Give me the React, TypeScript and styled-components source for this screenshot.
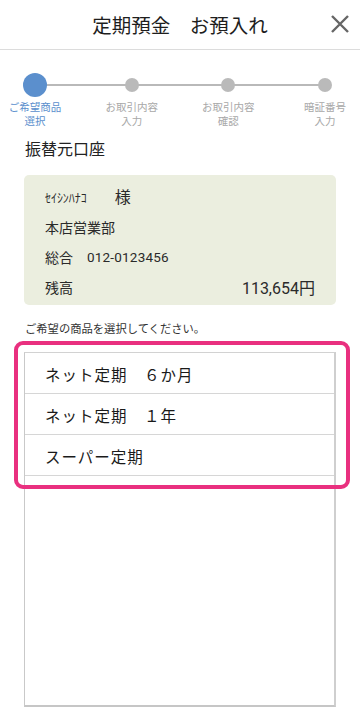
import React from 'react';
import styled, { createGlobalStyle } from 'styled-components';

const GlobalStyle = createGlobalStyle`
  html, body {
    margin: 0;
    padding: 0;
    background: #ffffff;
  }
  body {
    font-family: Roboto, 'Noto Sans CJK JP', sans-serif;
    color: #222222;
  }
  * {
    box-sizing: border-box;
  }
`;

const steps = [
  { label: ['ご希望商品', '選択'], active: true },
  { label: ['お取引内容', '入力'], active: false },
  { label: ['お取引内容', '確認'], active: false },
  { label: ['暗証番号', '入力'], active: false },
];

const products = ['ネット定期　６か月', 'ネット定期　１年', 'スーパー定期'];

const App = () => {
  return (
    <Page>
      <GlobalStyle />
      <Header>
        <Title>定期預金　お預入れ</Title>
        <CloseButton aria-label="閉じる">
          <svg width="20" height="20" viewBox="0 0 20 20">
            <path d="M2 2 L18 18 M18 2 L2 18" stroke="#666" strokeWidth="2.4" strokeLinecap="butt" />
          </svg>
        </CloseButton>
      </Header>

      <Stepper>
        <Track />
        {steps.map((step, i) => (
          <Step key={i}>
            <DotBox>
              <Dot active={step.active} />
            </DotBox>
            <StepLabel active={step.active}>
              {step.label.map(line => (
                <span key={line}>{line}</span>
              ))}
            </StepLabel>
          </Step>
        ))}
      </Stepper>

      <Content>
        <SectionTitle>振替元口座</SectionTitle>
        <AccountCard>
          <CardRow>
            <KanaName>ｾｲｼﾝﾊﾅｺ</KanaName>
            <Honorific>様</Honorific>
          </CardRow>
          <CardRow>本店営業部</CardRow>
          <CardRow>
            総合<AccountNo>012-0123456</AccountNo>
          </CardRow>
          <CardRow spread>
            <span>残高</span>
            <Balance>113,654円</Balance>
          </CardRow>
        </AccountCard>

        <Hint>ご希望の商品を選択してください。</Hint>

        <ListWrap>
          <ProductList>
            {products.map(p => (
              <ProductItem key={p}>{p}</ProductItem>
            ))}
          </ProductList>
          <Highlight />
        </ListWrap>
      </Content>
    </Page>
  );
};

export default App;

interface IActive {
  active: boolean;
}

const Page = styled.div`
  width: 360px;
  height: 710px;
  overflow: hidden;
  background: #fff;
`;

const Header = styled.header`
  height: 50px;
  border-bottom: 1px solid #dcdcdc;
  display: flex;
  align-items: center;
  justify-content: center;
  position: relative;
`;

const Title = styled.h1`
  margin: 0;
  font-size: 19.5px;
  font-weight: 400;
  line-height: 26px;
  color: #1e1e1e;
  font-family: 'Noto Sans CJK JP', sans-serif;
  margin-top: 1px;
`;

const CloseButton = styled.button`
  position: absolute;
  right: 10px;
  top: 14px;
  width: 20px;
  height: 20px;
  padding: 0;
  border: none;
  background: none;
  display: flex;
`;

const Stepper = styled.div`
  position: relative;
  display: flex;
  justify-content: space-between;
  padding: 23px 5px 0;
`;

const Track = styled.div`
  position: absolute;
  left: 35px;
  right: 35px;
  top: 34px;
  height: 2px;
  background: #b9b9b9;
`;

const Step = styled.div`
  width: 60px;
  display: flex;
  flex-direction: column;
  align-items: center;
  position: relative;
`;

const DotBox = styled.div`
  height: 24px;
  display: flex;
  align-items: center;
  justify-content: center;
`;

const Dot = styled.div<IActive>`
  width: ${p => (p.active ? '24px' : '14px')};
  height: ${p => (p.active ? '24px' : '14px')};
  border-radius: 50%;
  background: ${p => (p.active ? '#5b8fcd' : '#bababa')};
`;

const StepLabel = styled.div<IActive>`
  margin-top: 4px;
  display: flex;
  flex-direction: column;
  align-items: center;
  font-size: 10.5px;
  line-height: 13.5px;
  white-space: nowrap;
  color: ${p => (p.active ? '#5b8fcd' : '#a8a8a8')};
`;

const Content = styled.div`
  padding: 0 24px;
`;

const SectionTitle = styled.h2`
  margin: 11px 0 0 1px;
  font-size: 16px;
  font-weight: 400;
  line-height: 22px;
  color: #222;
`;

const AccountCard = styled.div`
  margin-top: 14px;
  height: 130px;
  background: #ebeedf;
  border-radius: 5px;
  padding: 7px 21px 3px;
  font-size: 14px;
  color: #2a2a2a;
`;

const CardRow = styled.div<{ spread?: boolean }>`
  height: 30px;
  display: flex;
  align-items: center;
  justify-content: ${p => (p.spread ? 'space-between' : 'flex-start')};
`;

const KanaName = styled.span`
  font-size: 12.5px;
  transform: scaleX(0.95);
  transform-origin: left center;
`;

const Honorific = styled.span`
  font-size: 16px;
  margin-left: 26px;
  margin-top: -3px;
`;

const AccountNo = styled.span`
  margin-left: 14px;
  font-size: 13.5px;
  letter-spacing: 0.2px;
`;

const Balance = styled.span`
  font-size: 16px;
`;

const Hint = styled.p`
  margin: 17px 0 0 1px;
  font-size: 11.3px;
  line-height: 16px;
  color: #333;
`;

const ListWrap = styled.div`
  position: relative;
  margin-top: 14px;
`;

const ProductList = styled.ul`
  margin: 0;
  padding: 0;
  list-style: none;
  height: 355px;
  border-style: solid;
  border-width: 1px 2px 2px 1px;
  border-color: #d2d2d2 #cfcfcf #c6c6c6 #c9c9c9;
`;

const ProductItem = styled.li`
  height: 41px;
  border-bottom: 1px solid #d6d6d6;
  display: flex;
  align-items: center;
  padding: 1px 0 0 20px;
  font-size: 15.5px;
  letter-spacing: 1px;
  color: #1a1a1a;
  font-family: 'Noto Sans CJK JP', sans-serif;
`;

const Highlight = styled.div`
  position: absolute;
  left: -10px;
  right: -14px;
  top: -11px;
  height: 148px;
  border: 4px solid #e9307f;
  border-radius: 9px;
  pointer-events: none;
`;
